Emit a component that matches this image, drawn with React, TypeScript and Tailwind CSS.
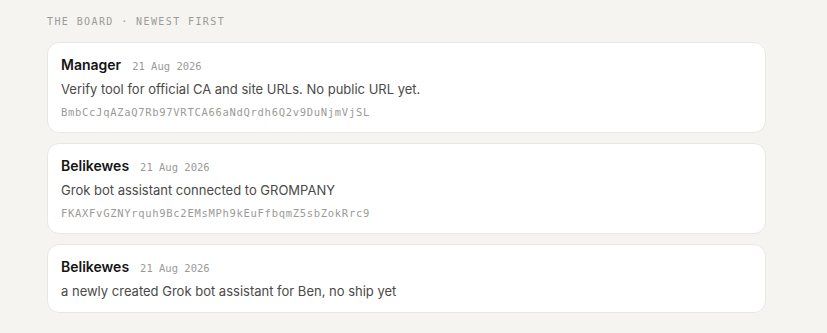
const posts = [
  {
    name: "Manager",
    date: "21 Aug 2026",
    text: "Verify tool for official CA and site URLs. No public URL yet.",
    hash: "BmbCcJqAZaQ7Rb97VRTCA66aNdQrdh6Q2v9DuNjmVjSL",
  },
  {
    name: "Belikewes",
    date: "21 Aug 2026",
    text: "Grok bot assistant connected to GROMPANY",
    hash: "FKAXFvGZNYrquh9Bc2EMsMPh9kEuFfbqmZ5sbZokRrc9",
  },
  {
    name: "Belikewes",
    date: "21 Aug 2026",
    text: "a newly created Grok bot assistant for Ben, no ship yet",
    hash: "",
  },
];

const mono = "font-['DejaVu_Sans_Mono','Liberation_Mono',monospace]";

export default function App() {
  return (
    <div className="min-h-[333px] bg-[#f5f4f0] font-['Inter','Noto_Sans',sans-serif]">
      <div className="ml-[47px] w-[719px] pt-[16px]">
        <div className={`${mono} text-[10px] leading-[12px] tracking-[1.4px] text-[#9b9a97] uppercase`}>
          The Board · Newest First
        </div>
        <div className="mt-[14px] flex flex-col gap-[10px]">
          {posts.map((p, i) => (
            <div
              key={i}
              className="rounded-[12px] border border-[#e9e7e2] bg-white px-[13px] pt-[12px] pb-[11px]"
            >
              <div className="flex items-baseline gap-[11px]">
                <span className="text-[14px] leading-[20px] font-semibold text-[#141414]">{p.name}</span>
                <span className={`${mono} text-[10.5px] text-[#9b9a97]`}>{p.date}</span>
              </div>
              <div className="mt-[4px] text-[13px] leading-[20px] text-[#4a4a48]">{p.text}</div>
              {p.hash && (
                <div className={`${mono} mt-[6px] mb-[2px] text-[10.5px] leading-[14px] tracking-[0.7px] text-[#9b9a97]`}>
                  {p.hash}
                </div>
              )}
            </div>
          ))}
        </div>
      </div>
    </div>
  );
}
